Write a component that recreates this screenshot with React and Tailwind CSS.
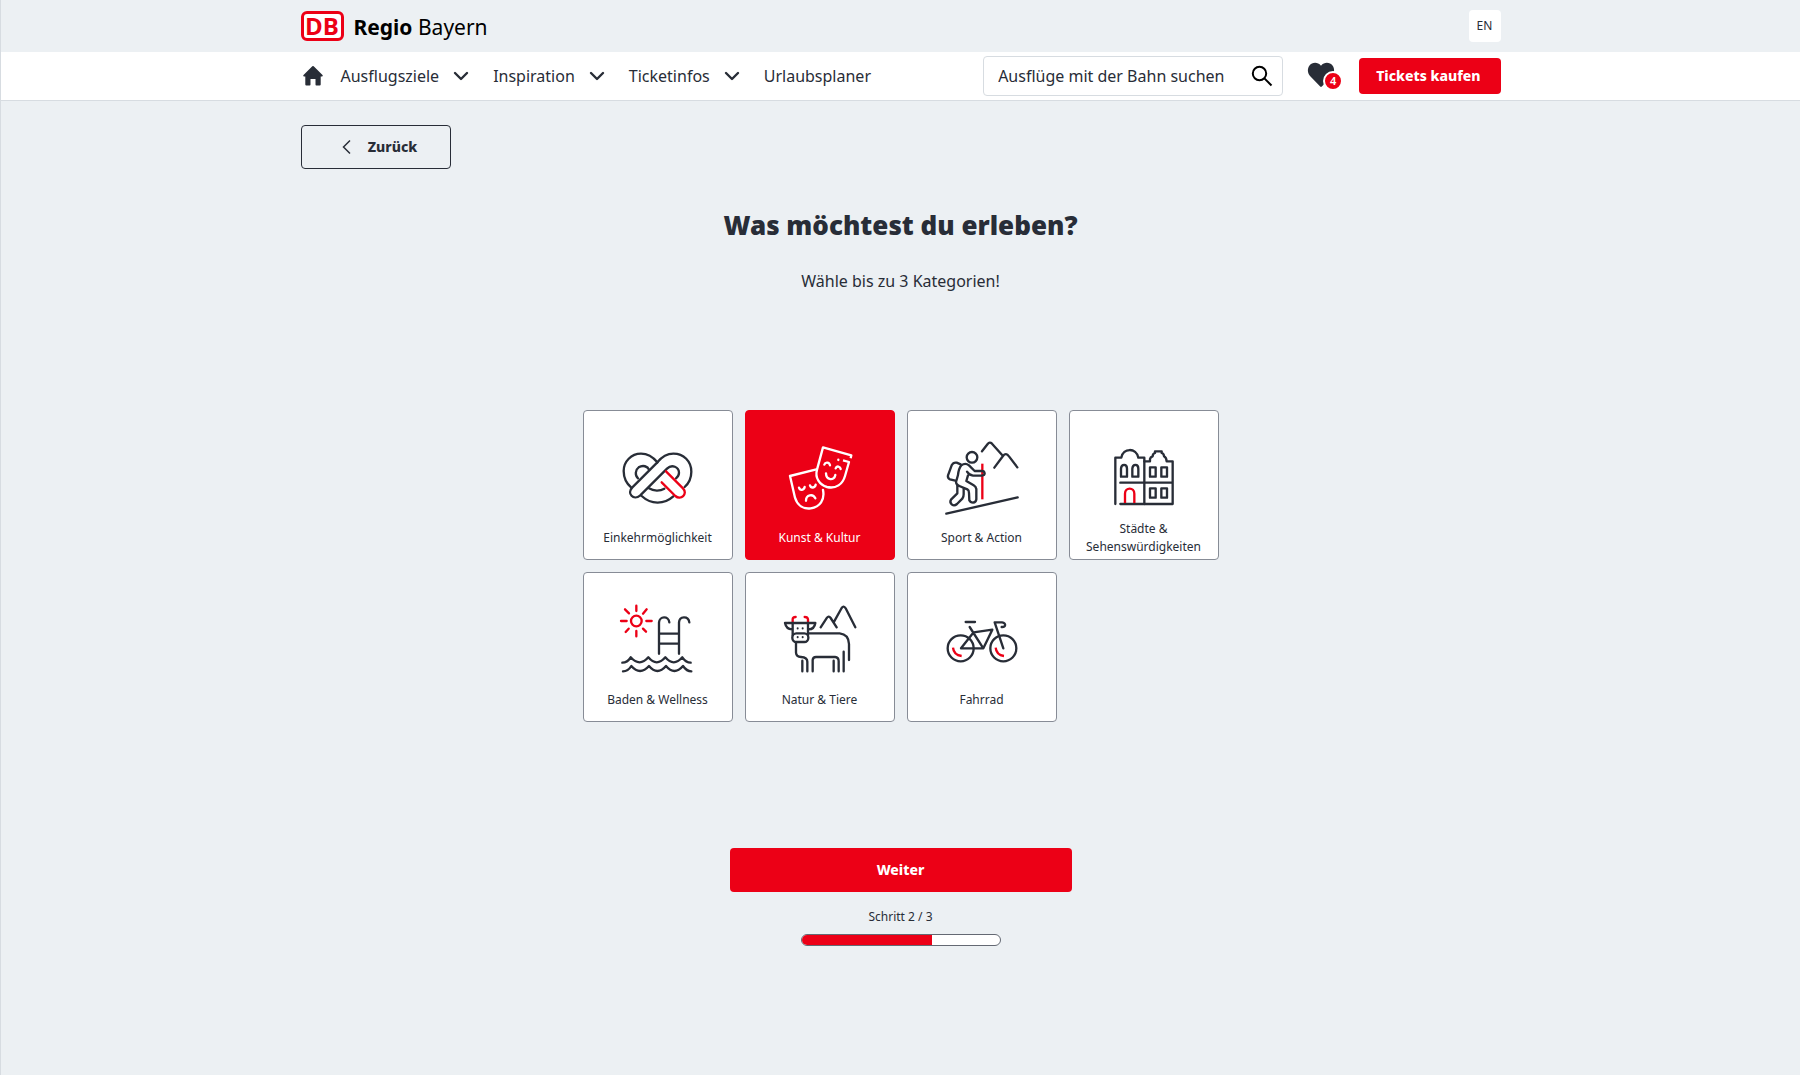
import { useState } from "react";

const INK = "#282d37";
const RED = "#ec0016";

function Icon({ x, y, children }) {
  return (
    <svg
      className="size-20 shrink-0"
      viewBox={`${x} ${y} 240 240`}
      fill="none"
      stroke="currentColor"
      strokeWidth="7"
      strokeLinecap="round"
      strokeLinejoin="round"
      aria-hidden="true"
    >
      {children}
    </svg>
  );
}

function PretzelIcon() {
  return (
    <Icon x={115} y={115}>
      <path d="M155 264C141 252 132 234 132 214C132 185 155 162 184 162C204 162 220 172 233 188" />
      <path d="M233 188L158 263C140 282 162 303 181 288L262 207C277 192 298 203 298 219C298 226 295 231 289 236" />
      <path d="M233 188C246 172 262 162 281 162C312 162 335 185 335 216C335 234 327 251 315 262" />
      <path d="M175 236C165 227 167 210 177 203C190 195 204 200 208 210" />
      <path d="M186 289C214 315 253 315 281 290M208 266C222 275 241 275 254 267" />
      <path stroke={RED} d="M259 215L310 266C326 283 303 303 287 289L246 248" />
    </Icon>
  );
}

function MasksIcon() {
  return (
    <Icon x={120} y={115}>
      <path strokeLinecap="butt" d="M332 176L334 167L249 143L231 210C224 235 239 256 261 262C288 268 308 254 315 229L327 187L309 182" />
      <path d="M295 180V181M253 195C256 186 268 187 270 197M287 206C290 197 301 200 302 208M258 221C258 242 283 244 286 226" />
      <path d="M229 209L150 229L165 294C172 317 190 329 212 326C240 322 255 300 249 271" />
      <path d="M177 264C180 274 192 272 194 262M210 257C213 267 225 265 227 255M198 303C198 285 219 281 226 296" />
    </Icon>
  );
}

function HikerIcon() {
  return (
    <Icon x={126} y={115}>
      <circle cx="216" cy="173" r="16" />
      <path d="M246 155L263 133Q269 125 276 132L309 169M283 204L309 169Q318 157 327 170L352 203" />
      <path stroke={RED} strokeLinecap="butt" d="M247 192V299" />
      <path d="M139 342L353 293" />
      <path d="M182 194L170 189Q160 187 155 197L144 227Q142 236 150 239L166 243" />
      <path d="M201 216Q208 227 219 228H246Q254 227 254 221Q253 214 246 214H224L207 197Q196 188 184 197Q176 207 174 226L168 247Q169 257 178 259L202 269Q207 272 207 280L208 302Q211 309 219 309Q228 308 229 299V268Q228 261 221 257L199 244L204 227" />
      <path d="M172 255V281L153 300Q148 308 156 315Q163 320 171 313L187 297Q191 292 191 284V268" />
    </Icon>
  );
}

function TownIcon() {
  return (
    <Icon x={132} y={115}>
      <path d="M166 313V174H184C189 144 229 143 235 174H253V313" />
      <path d="M253 185H270V178Q271 172 278 170Q278 162 285 160V155H305V160Q312 162 312 170Q319 172 320 185H338V313H181M181 249H338" />
      <path d="M183 231V207C184 192 201 192 201 207V231ZM217 231V207C218 192 235 192 235 207V231Z" />
      <path d="M270 203H287V231H270ZM304 203H321V231H304ZM270 266H287V294H270ZM304 266H321V294H304Z" />
      <path stroke={RED} strokeLinecap="butt" d="M195 310V282C195 262 223 262 223 282V310" />
    </Icon>
  );
}

function PoolIcon() {
  return (
    <Icon x={115} y={106}>
      <g stroke={RED}>
        <circle cx="170" cy="169" r="16" />
        <path d="M170 123V139M170 199V215M124 169H141M200 169H216M136 134L148 146M190 192L199 201M201 134L190 147M147 192L138 202" />
      </g>
      <path d="M238 267V174C239 153 267 153 269 173M298 267V174C299 153 326 153 329 173M238 207H298M238 237H298" />
      <path d="M128 294Q143 294 153 278Q180 308 206 278Q231 308 257 278Q282 308 308 278Q319 294 333 294M130 320Q145 320 155 304Q181 334 208 304Q233 334 259 304Q284 334 310 304Q321 320 335 320" />
    </Icon>
  );
}

function CowIcon() {
  return (
    <Icon x={120} y={106}>
      <path stroke={RED} d="M158 173V164Q158 157 167 157M204 173V164Q203 157 194 157" />
      <path d="M158 194Q139 195 135 175H226Q223 195 204 194M158 175V212M204 175V212" />
      <rect x="157" y="206" width="48" height="26" rx="12" />
      <path strokeWidth="6" d="M173 191V191.500M188 191V191.500M173 217V217.500M188 217V217.500" />
      <path d="M205 206H299Q326 209 327 238V286M311 261V320" />
      <path d="M168 235V264Q169 277 183 277Q202 278 202 291V320M187 288V320M218 320V286Q219 277 228 277H285Q296 278 296 290V320M281 288V320" />
      <path d="M242 188L261 159Q266 152 272 160L290 188M281 173L305 130Q311 121 317 131L346 188" />
    </Icon>
  );
}

function BikeIcon() {
  return (
    <Icon x={126} y={106}>
      <circle cx="182" cy="251" r="39" />
      <circle cx="310" cy="251" r="39" />
      <path d="M197 172H225M209 187L250 251H183L221 203L277 195L250 251M310 251L284 173H306C321 176 316 188 305 187" />
      <path stroke={RED} strokeLinecap="butt" d="M159 249Q161 271 185 274M287 249Q289 271 312 274" />
    </Icon>
  );
}

const CATEGORIES = [
  { label: "Einkehrmöglichkeit", Glyph: PretzelIcon },
  { label: "Kunst & Kultur", Glyph: MasksIcon },
  { label: "Sport & Action", Glyph: HikerIcon },
  { label: "Städte & Sehenswürdigkeiten", Glyph: TownIcon },
  { label: "Baden & Wellness", Glyph: PoolIcon },
  { label: "Natur & Tiere", Glyph: CowIcon },
  { label: "Fahrrad", Glyph: BikeIcon },
];

function Category({ label, Glyph, selected, onToggle }) {
  const tone = selected
    ? "border-[#ec0016] bg-[#ec0016] text-white"
    : "border-[#878c96] bg-white text-[#282d37]";
  return (
    <button
      type="button"
      aria-pressed={selected}
      onClick={onToggle}
      className={`flex size-[150px] cursor-pointer flex-col items-center rounded border pt-[27px] ${tone}`}
    >
      <Glyph />
      <span className="flex h-10 w-full items-center justify-center px-2 text-center text-xs leading-[18px]">
        {label}
      </span>
    </button>
  );
}

function Chevron() {
  return (
    <svg className="h-3 w-4" viewBox="0 0 16 12" fill="none" stroke="currentColor" strokeWidth="2.400" strokeLinecap="round" strokeLinejoin="round" aria-hidden="true">
      <path d="M2 3L8 9L14 3" />
    </svg>
  );
}

function MenuButton({ children }) {
  return (
    <button type="button" className="flex cursor-pointer items-center gap-3.5">
      {children}
      <Chevron />
    </button>
  );
}

function Header() {
  return (
    <header>
      <div className="mx-auto flex h-[52px] max-w-[1200px] items-center justify-between">
        <a href="#start" className="flex items-center gap-2.5 text-black">
          <span className="flex h-[30px] w-[43px] items-center justify-center rounded-md border-3 border-[#ec0016] bg-white font-['Open_Sans',sans-serif] text-2xl leading-6 font-bold text-[#ec0016]">
            DB
          </span>
          <span className="pt-0.5 text-[21px] leading-8">
            <b className="font-bold">Regio</b> Bayern
          </span>
        </a>
        <button type="button" className="size-8 cursor-pointer rounded bg-white text-xs">
          EN
        </button>
      </div>
      <div className="border-b border-[#d7dce1] bg-white">
        <div className="mx-auto flex h-12 max-w-[1200px] items-center justify-between">
          <nav className="flex items-center gap-6 text-base">
            <a href="#home" aria-label="Startseite" className="-mr-2">
              <svg className="size-6" viewBox="0 0 24 24" fill="currentColor" aria-hidden="true">
                <path d="M11.300 2.300Q12 1.700 12.700 2.300L21.500 11Q22.400 12.300 21 12.600H19.700V20.500Q19.700 21.500 18.700 21.500H15.300Q14.500 21.500 14.500 20.500V15H9.500V20.500Q9.500 21.500 8.700 21.500H5.300Q4.300 21.500 4.300 20.500V12.600H3Q1.600 12.300 2.500 11Z" />
              </svg>
            </a>
            <MenuButton>Ausflugsziele</MenuButton>
            <MenuButton>Inspiration</MenuButton>
            <MenuButton>Ticketinfos</MenuButton>
            <a href="#urlaubsplaner">Urlaubsplaner</a>
          </nav>
          <div className="flex items-center gap-6">
            <form className="flex h-10 w-[300px] items-center rounded border border-[#d7dce1] pr-2 pl-[14px]" role="search">
              <input
                type="search"
                aria-label="Ausflüge mit der Bahn suchen"
                placeholder="Ausflüge mit der Bahn suchen"
                className="min-w-0 flex-1 bg-transparent text-base outline-none placeholder:text-[#282d37]"
              />
              <button type="button" aria-label="Suchen" className="cursor-pointer text-black">
                <svg className="size-6" viewBox="0 0 24 24" fill="none" stroke="currentColor" strokeWidth="2" aria-hidden="true">
                  <circle cx="9.500" cy="9.500" r="6.700" />
                  <path d="M14.400 14.400L21.500 21.500" />
                </svg>
              </button>
            </form>
            <a href="#merkliste" aria-label="Merkliste, 4 Einträge" className="relative -mr-2 block h-[30px] w-9">
              <svg className="h-7 w-7" viewBox="0 0 28 28" fill="currentColor" aria-hidden="true">
                <path d="M14 4.700C17.500 0.500 23 1.300 25.500 4.500C28 8 27.500 12.300 24.500 15.500L14.800 25.500Q14 26.300 13.200 25.500L3.500 15.500C0.500 12.300 0 8 2.500 4.500C5 1.300 10.500 0.500 14 4.700Z" />
              </svg>
              <span className="absolute right-0 bottom-0 flex size-5 items-center justify-center rounded-full border-2 border-white bg-[#ec0016] text-[11px] leading-4 font-semibold text-white">
                4
              </span>
            </a>
            <a href="#tickets" className="flex h-9 items-center rounded bg-[#ec0016] pr-5 pl-[17px] text-sm font-extrabold text-white">
              Tickets kaufen
            </a>
          </div>
        </div>
      </div>
    </header>
  );
}

export default function App() {
  const [selected, setSelected] = useState(["Kunst & Kultur"]);

  const toggle = (label) =>
    setSelected((now) => {
      if (now.includes(label)) return now.filter((entry) => entry !== label);
      return now.length < 3 ? [...now, label] : now;
    });

  return (
    <div className="min-h-screen border-l border-[#d7dce1] bg-[#ecf0f3] font-['Noto_Sans',sans-serif] text-[#282d37]">
      <Header />
      <main className="mx-auto flex max-w-[1200px] flex-col items-center pt-6 pb-16">
        <button type="button" className="flex h-11 w-[150px] cursor-pointer items-center justify-center gap-4 self-start rounded border border-[#282d37] pl-1.5 text-sm font-extrabold">
          <svg className="h-4 w-3" viewBox="0 0 12 16" fill="none" stroke={INK} strokeWidth="1.500" aria-hidden="true">
            <path d="M10 1.500L3.500 8L10 14.500" />
          </svg>
          Zurück
        </button>
        <h1 className="mt-9 text-[26px] leading-10 font-black">Was möchtest du erleben?</h1>
        <p className="mt-6 text-base leading-6">Wähle bis zu 3 Kategorien!</p>
        <div className="mt-[117px] flex max-w-[636px] flex-wrap gap-3">
          {CATEGORIES.map(({ label, Glyph }) => (
            <Category
              key={label}
              label={label}
              Glyph={Glyph}
              selected={selected.includes(label)}
              onToggle={() => toggle(label)}
            />
          ))}
        </div>
        <button type="button" className="mt-[126px] h-11 w-full max-w-[342px] cursor-pointer rounded bg-[#ec0016] text-sm font-extrabold text-white">
          Weiter
        </button>
        <p className="mt-4 text-xs leading-[18px]">Schritt 2 / 3</p>
        <div
          role="progressbar"
          aria-label="Fortschritt"
          aria-valuemin={0}
          aria-valuemax={3}
          aria-valuenow={2}
          className="mt-2 h-3 w-[200px] overflow-hidden rounded-full border border-[#646973] bg-white"
        >
          <div className="h-full w-[66%] bg-[#ec0016]" />
        </div>
      </main>
    </div>
  );
}
